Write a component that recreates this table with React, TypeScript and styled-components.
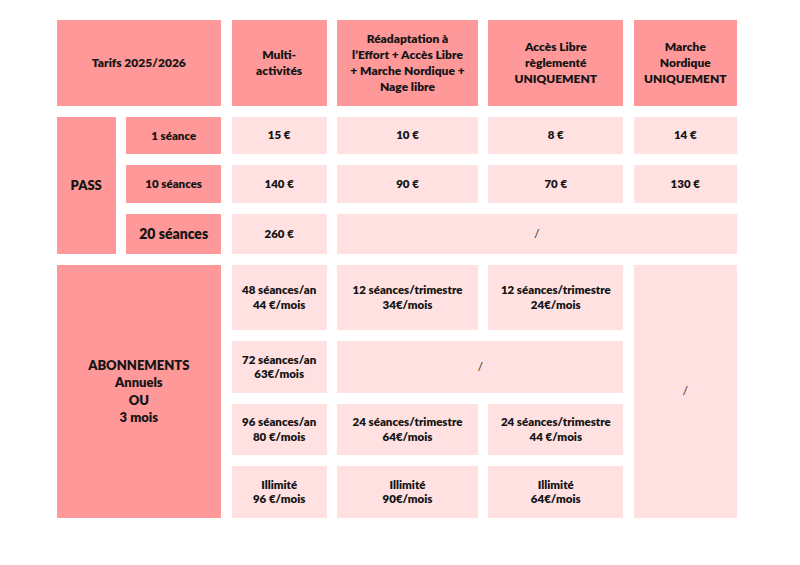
import React from "react";
import styled, { createGlobalStyle, css } from "styled-components";

const GlobalStyle = createGlobalStyle`
  html, body {
    margin: 0;
    padding: 0;
    background: #ffffff;
  }
  body {
    font-family: Lato, "Liberation Sans", Arial, sans-serif;
    color: #141414;
  }
`;

const Page = styled.div`
  width: 800px;
  height: 565px;
  box-sizing: border-box;
  padding: 20px 0 0 56.7px;
  background: #ffffff;
`;

const Table = styled.div`
  display: grid;
  grid-template-columns: 59px 94.6px 95px 140.3px 134.9px 102.7px;
  grid-template-rows: 85.7px 37.6px 37.7px 40.4px 65.3px 51.7px 51.7px 52px;
  column-gap: 10.7px;
  row-gap: 10.9px;
`;

type Place = { $col: string; $row: string };

const place = css<Place>`
  grid-column: ${(p) => p.$col};
  grid-row: ${(p) => p.$row};
`;

const BaseCell = styled.div<Place>`
  ${place};
  display: flex;
  align-items: center;
  justify-content: center;
  text-align: center;
  box-sizing: border-box;
`;

const HeadCell = styled(BaseCell)`
  background: #ff9898;
  font-weight: 800;
  font-size: 12px;
  line-height: 15.7px;
`;

const LabelCell = styled(BaseCell)<{ $size?: number; $lh?: number }>`
  background: #ff9898;
  font-weight: 800;
  font-size: ${(p) => p.$size ?? 12}px;
  line-height: ${(p) => p.$lh ?? 17.5}px;
`;

const ValueCell = styled(BaseCell)<{ $thin?: boolean }>`
  background: #ffe1e1;
  font-weight: ${(p) => (p.$thin ? 400 : 800)};
  font-size: 11.5px;
  line-height: 14.3px;
`;

type Line = string[];

const Lines: React.FC<{ lines: Line }> = ({ lines }) => (
  <div>
    {lines.map((l, i) => (
      <React.Fragment key={i}>
        {i > 0 && <br />}
        {l}
      </React.Fragment>
    ))}
  </div>
);

const passRows: { label: string; values: string[] }[] = [
  { label: "1 séance", values: ["15 €", "10 €", "8 €", "14 €"] },
  { label: "10 séances", values: ["140 €", "90 €", "70 €", "130 €"] },
];

export default function App() {
  return (
    <Page>
      <GlobalStyle />
      <Table>
        <HeadCell $col="1 / 3" $row="1">Tarifs 2025/2026</HeadCell>
        <HeadCell $col="3" $row="1">
          <Lines lines={["Multi-", "activités"]} />
        </HeadCell>
        <HeadCell $col="4" $row="1">
          <Lines
            lines={[
              "Réadaptation à",
              "l’Effort + Accès Libre",
              "+ Marche Nordique +",
              "Nage libre",
            ]}
          />
        </HeadCell>
        <HeadCell $col="5" $row="1">
          <Lines lines={["Accès Libre", "règlementé", "UNIQUEMENT"]} />
        </HeadCell>
        <HeadCell $col="6" $row="1">
          <Lines lines={["Marche", "Nordique", "UNIQUEMENT"]} />
        </HeadCell>

        <LabelCell $col="1" $row="2 / 5" $size={13}>PASS</LabelCell>

        {passRows.map((r, i) => (
          <React.Fragment key={r.label}>
            <LabelCell $col="2" $row={`${i + 2}`} $size={11.5}>
              {r.label}
            </LabelCell>
            {r.values.map((v, j) => (
              <ValueCell key={v + j} $col={`${j + 3}`} $row={`${i + 2}`}>
                {v}
              </ValueCell>
            ))}
          </React.Fragment>
        ))}

        <LabelCell $col="2" $row="4" $size={14}>20 séances</LabelCell>
        <ValueCell $col="3" $row="4">260 €</ValueCell>
        <ValueCell $col="4 / 7" $row="4" $thin>/</ValueCell>

        <LabelCell $col="1 / 3" $row="5 / 9" $size={13}>
          <Lines lines={["ABONNEMENTS", "Annuels", "OU", "3 mois"]} />
        </LabelCell>

        <ValueCell $col="3" $row="5">
          <Lines lines={["48 séances/an", "44 €/mois"]} />
        </ValueCell>
        <ValueCell $col="4" $row="5">
          <Lines lines={["12 séances/trimestre", "34€/mois"]} />
        </ValueCell>
        <ValueCell $col="5" $row="5">
          <Lines lines={["12 séances/trimestre", "24€/mois"]} />
        </ValueCell>
        <ValueCell $col="6" $row="5 / 9" $thin>/</ValueCell>

        <ValueCell $col="3" $row="6">
          <Lines lines={["72 séances/an", "63€/mois"]} />
        </ValueCell>
        <ValueCell $col="4 / 6" $row="6" $thin>/</ValueCell>

        <ValueCell $col="3" $row="7">
          <Lines lines={["96 séances/an", "80 €/mois"]} />
        </ValueCell>
        <ValueCell $col="4" $row="7">
          <Lines lines={["24 séances/trimestre", "64€/mois"]} />
        </ValueCell>
        <ValueCell $col="5" $row="7">
          <Lines lines={["24 séances/trimestre", "44 €/mois"]} />
        </ValueCell>

        <ValueCell $col="3" $row="8">
          <Lines lines={["Illimité", "96 €/mois"]} />
        </ValueCell>
        <ValueCell $col="4" $row="8">
          <Lines lines={["Illimité", "90€/mois"]} />
        </ValueCell>
        <ValueCell $col="5" $row="8">
          <Lines lines={["Illimité", "64€/mois"]} />
        </ValueCell>
      </Table>
    </Page>
  );
}
